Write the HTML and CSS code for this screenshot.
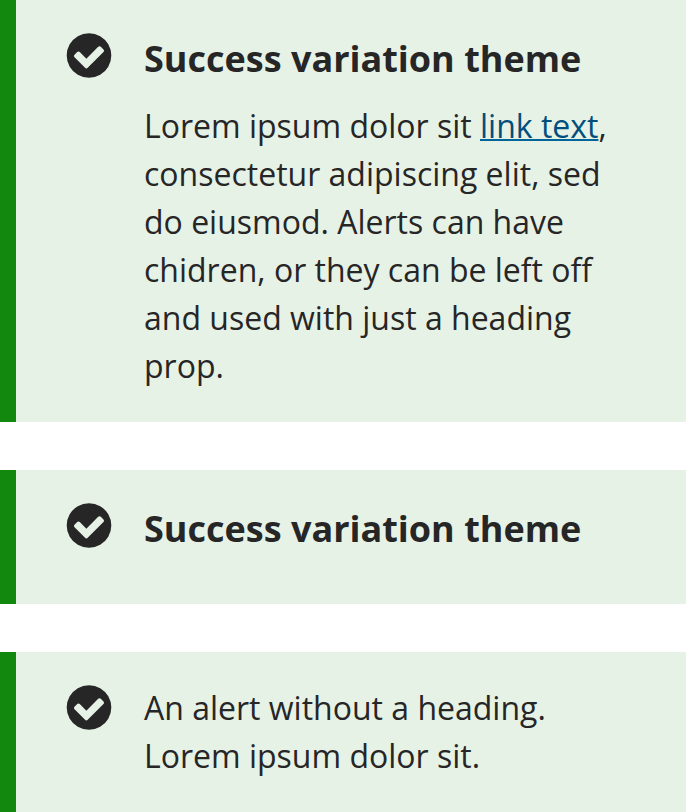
FILE: index.html
```html
<!DOCTYPE html>
<html lang="en">
<head>
<meta charset="utf-8">
<meta name="viewport" content="width=device-width, initial-scale=1">
<title>Alerts</title>
<link rel="stylesheet" href="styles.css">
</head>
<body>
<main class="alerts">
  <section class="alert">
    <svg class="alert-icon" viewBox="104 87 1584 1584" aria-hidden="true"><path id="check-circle" d="M1412 734q0-28-18-46l-91-90q-19-19-45-19t-45 19l-408 407-226-226q-19-19-45-19t-45 19l-91 90q-18 18-18 46 0 27 18 45l362 362q19 19 45 19 27 0 46-19l543-543q18-18 18-45zm252 162q0 209-103 385.5t-279.5 279.5-385.5 103-385.5-103-279.5-279.5-103-385.5 103-385.5 279.5-279.5 385.5-103 385.5 103 279.5 279.5 103 385.5z"/></svg>
    <div class="alert-body">
      <h2 class="alert-heading">Success variation theme</h2>
      <p class="alert-text">Lorem ipsum dolor sit <a class="alert-link" href="#">link text</a>, consectetur adipiscing elit, sed do eiusmod. Alerts can have chidren, or they can be left off and used with just a heading prop.</p>
    </div>
  </section>
  <section class="alert">
    <svg class="alert-icon" viewBox="104 87 1584 1584" aria-hidden="true"><use href="#check-circle"/></svg>
    <div class="alert-body">
      <h2 class="alert-heading">Success variation theme</h2>
    </div>
  </section>
  <section class="alert">
    <svg class="alert-icon" viewBox="104 87 1584 1584" aria-hidden="true"><use href="#check-circle"/></svg>
    <div class="alert-body">
      <p class="alert-text">An alert without a heading. Lorem ipsum dolor sit.</p>
    </div>
  </section>
</main>
</body>
</html>
```
FILE: styles.css
```css
* { box-sizing: border-box; }

body {
  margin: 0;
  background: #fff;
  color: #262626;
  font-family: "Open Sans", sans-serif;
  font-size: 32px;
  line-height: 48px;
}

.alerts {
  display: flex;
  flex-direction: column;
  gap: 48px;
}

.alert {
  display: flex;
  align-items: flex-start;
  gap: 32px;
  padding: 32px 48px 32px 50px;
  border-left: 16px solid #12890e;
  background: #e7f2e6;
}

.alert-icon {
  flex: none;
  width: 46px;
  height: 46px;
  fill: #262626;
}

.alert-body {
  flex: 1;
  min-width: 0;
}

.alert-heading {
  margin: 0 0 16px;
  font-size: 36px;
  font-weight: 700;
  line-height: 54px;
}

.alert-text { margin: 0; }

.alert-link {
  color: #004f7d;
  text-decoration: underline;
  text-decoration-color: #006699;
  text-decoration-thickness: 2px;
}
```
